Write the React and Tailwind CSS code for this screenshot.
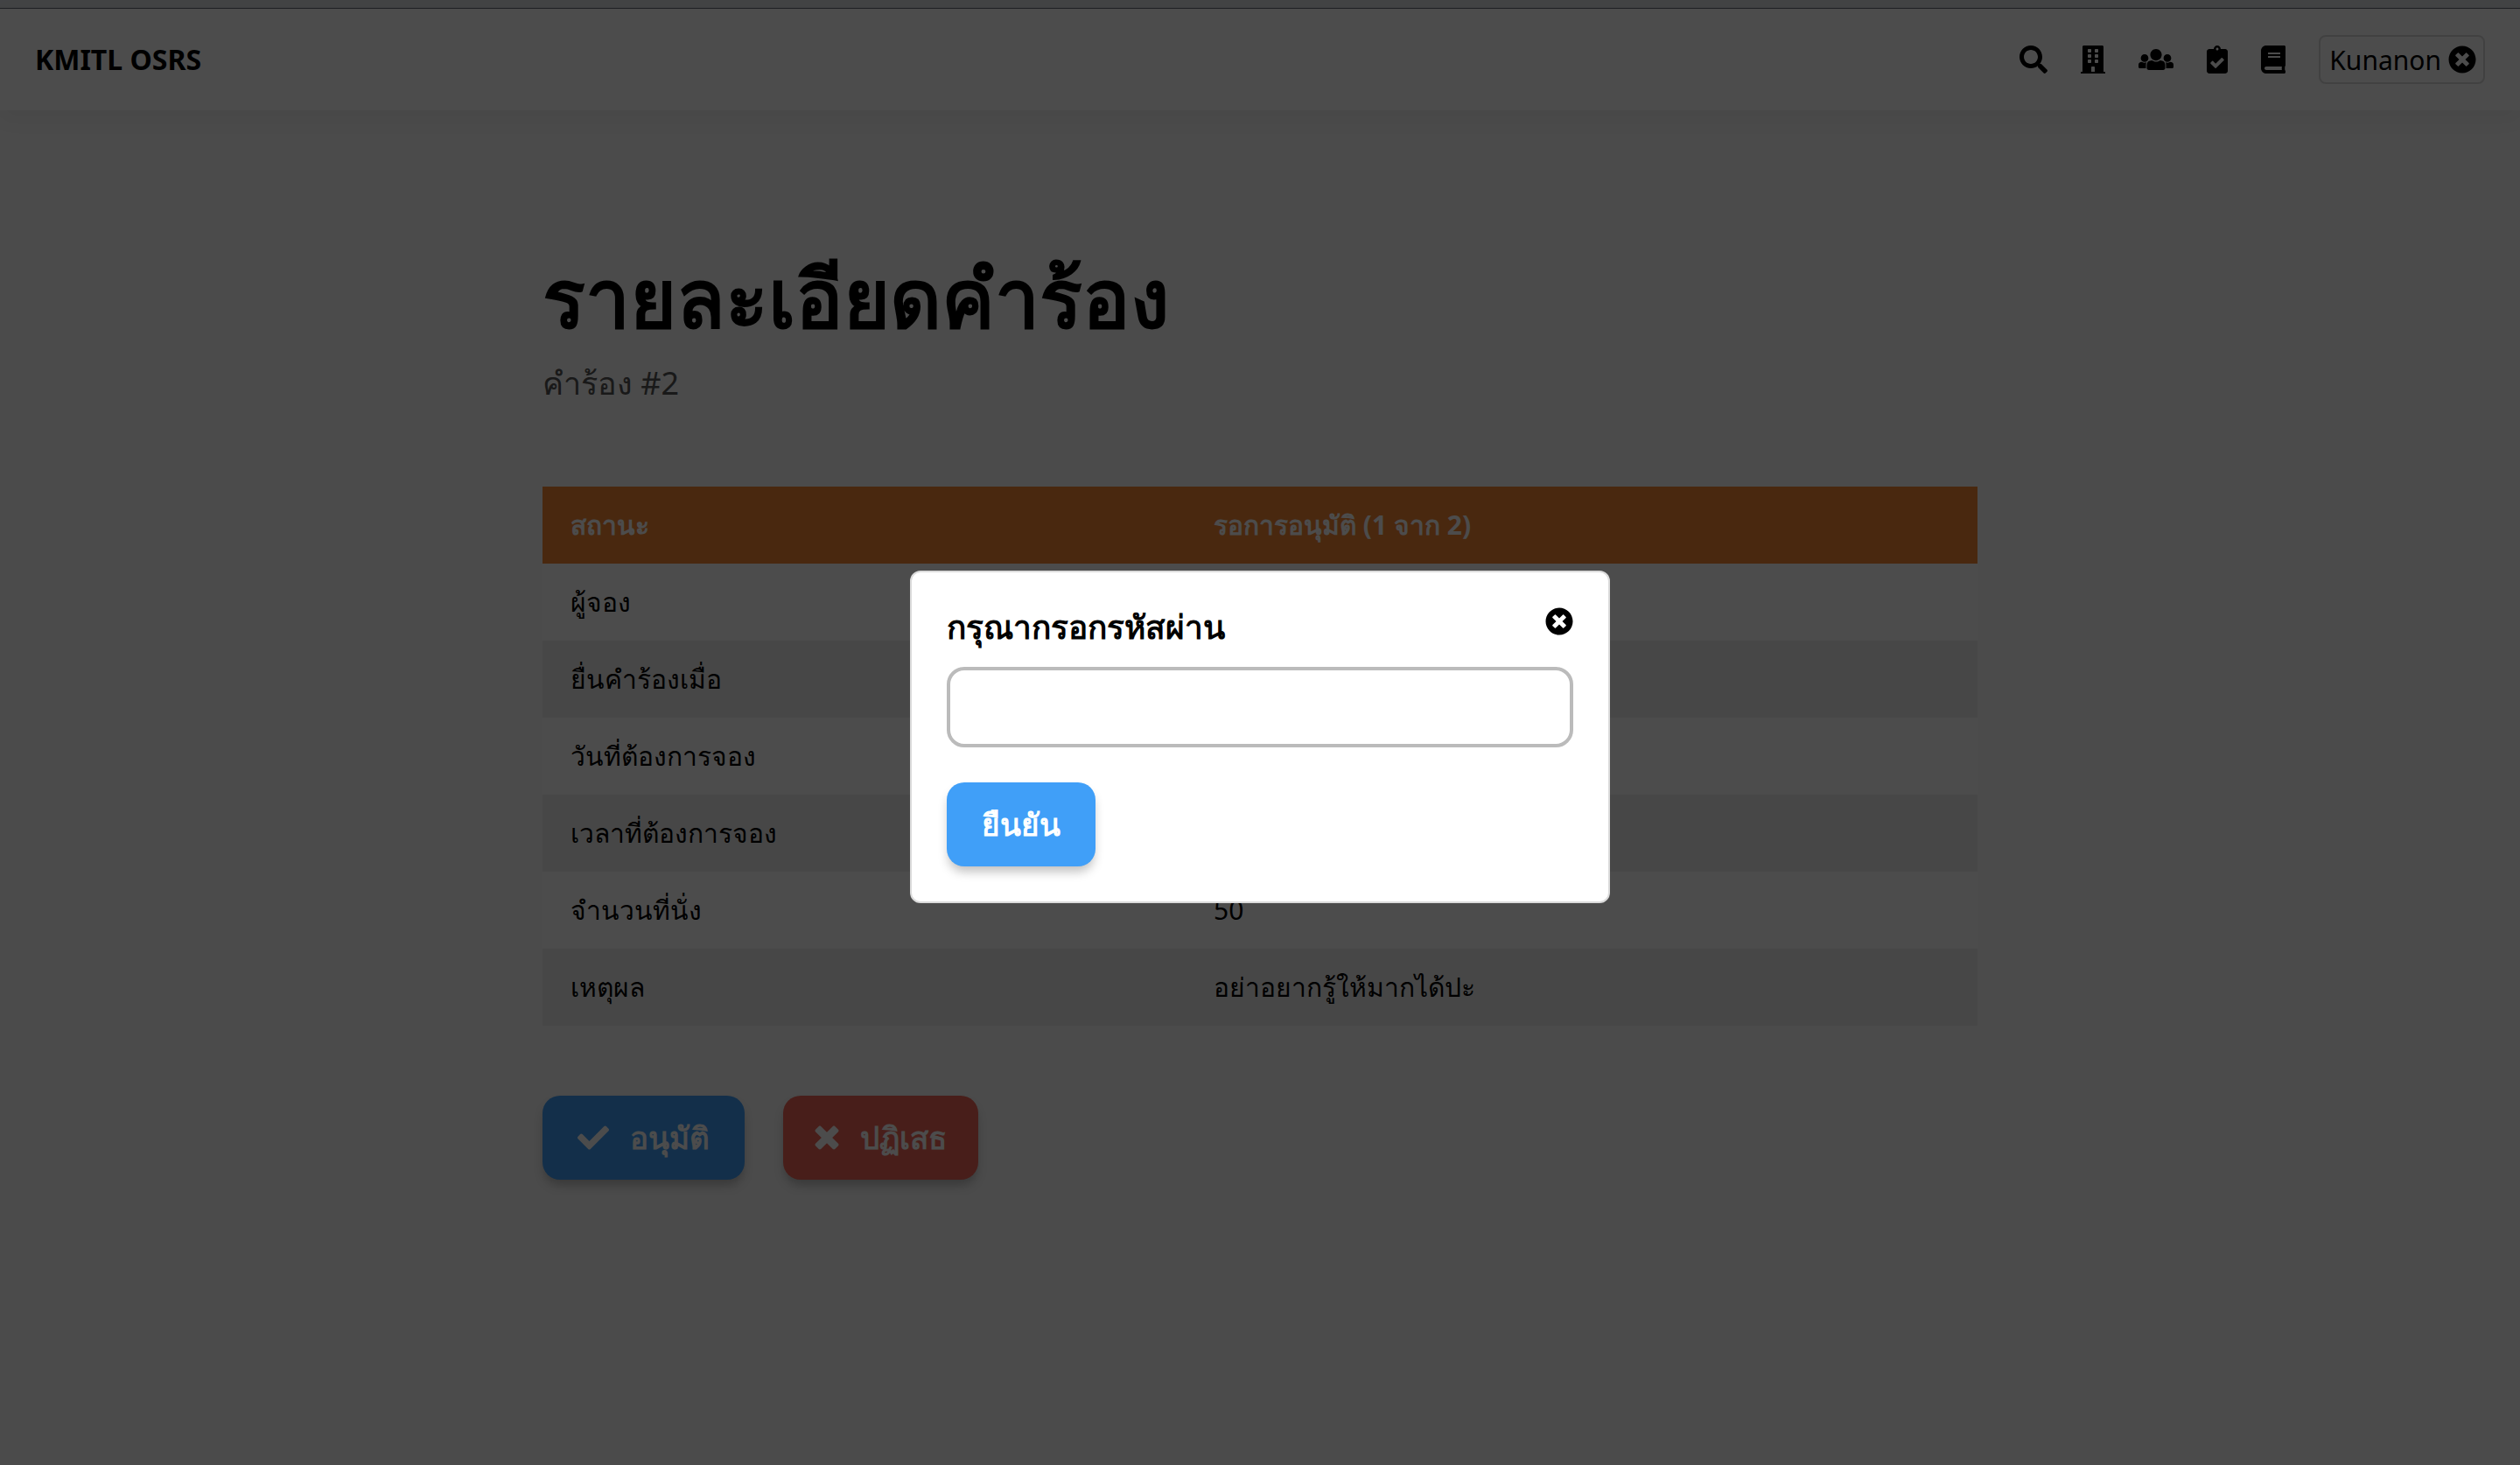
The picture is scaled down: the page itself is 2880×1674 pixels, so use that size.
import { FaSearch, FaBook, FaTimesCircle, FaCheck } from "react-icons/fa";

function BuildingIcon() {
  return (
    <svg viewBox="0 0 448 512" fill="currentColor" className="h-8 w-7" aria-hidden="true">
      <path d="M436 480h-20V24c0-13.255-10.745-24-24-24H56C42.745 0 32 10.745 32 24v456H12c-6.627 0-12 5.373-12 12v20h448v-20c0-6.627-5.373-12-12-12zM128 76c0-6.627 5.373-12 12-12h40c6.627 0 12 5.373 12 12v40c0 6.627-5.373 12-12 12h-40c-6.627 0-12-5.373-12-12V76zm0 96c0-6.627 5.373-12 12-12h40c6.627 0 12 5.373 12 12v40c0 6.627-5.373 12-12 12h-40c-6.627 0-12-5.373-12-12v-40zm52 148h-40c-6.627 0-12-5.373-12-12v-40c0-6.627 5.373-12 12-12h40c6.627 0 12 5.373 12 12v40c0 6.627-5.373 12-12 12zm76 160h-64v-84c0-6.627 5.373-12 12-12h40c6.627 0 12 5.373 12 12v84zm64-172c0 6.627-5.373 12-12 12h-40c-6.627 0-12-5.373-12-12v-40c0-6.627 5.373-12 12-12h40c6.627 0 12 5.373 12 12v40zm0-96c0 6.627-5.373 12-12 12h-40c-6.627 0-12-5.373-12-12v-40c0-6.627 5.373-12 12-12h40c6.627 0 12 5.373 12 12v40zm0-96c0 6.627-5.373 12-12 12h-40c-6.627 0-12-5.373-12-12V76c0-6.627 5.373-12 12-12h40c6.627 0 12 5.373 12 12v40z" />
    </svg>
  );
}

function UsersIcon() {
  return (
    <svg viewBox="0 0 640 512" fill="currentColor" className="h-8 w-10" aria-hidden="true">
      <path d="M320 64c57.990 0 105 47.010 105 105s-47.010 105-105 105-105-47.010-105-105S262.010 64 320 64zm113.463 217.366l-39.982-9.996c-49.168 35.365-108.766 27.473-146.961 0l-39.982 9.996C174.485 289.379 152 318.177 152 351.216V412c0 19.882 16.118 36 36 36h264c19.882 0 36-16.118 36-36v-60.784c0-33.039-22.485-61.837-54.537-69.850zM528 300c38.660 0 70-31.340 70-70s-31.340-70-70-70-70 31.340-70 70 31.340 70 70 70zm-416 0c38.660 0 70-31.340 70-70s-31.340-70-70-70-70 31.340-70 70 31.340 70 70 70zm24 112v-60.784c0-16.551 4.593-32.204 12.703-45.599-29.988 14.720-63.336 8.708-85.690-7.370l-26.655 6.664C14.990 310.252 0 329.452 0 351.477V392c0 13.255 10.745 24 24 24h112.169a52.417 52.417 0 0 1-.169-4zm467.642-107.090l-26.655-6.664c-27.925 20.086-60.890 19.233-85.786 7.218C499.369 318.893 504 334.601 504 351.216V412c0 1.347-.068 2.678-.169 4H616c13.255 0 24-10.745 24-24v-40.523c0-22.025-14.990-41.225-36.358-46.567z" />
    </svg>
  );
}

function ClipboardCheckIcon() {
  return (
    <svg viewBox="0 0 384 512" fill="currentColor" className="h-8 w-6" aria-hidden="true">
      <path d="M336 64h-80c0-35.300-28.700-64-64-64s-64 28.700-64 64H48C21.500 64 0 85.500 0 112v352c0 26.500 21.500 48 48 48h288c26.500 0 48-21.500 48-48V112c0-26.500-21.500-48-48-48zM192 40c13.300 0 24 10.700 24 24s-10.700 24-24 24-24-10.700-24-24 10.700-24 24-24zm121.200 231.800l-143 141.800c-4.700 4.700-12.300 4.600-17-.1l-82.600-83.300c-4.700-4.700-4.600-12.300.1-17L99.100 285c4.700-4.700 12.300-4.600 17 .1l46 46.400 106-105.200c4.700-4.700 12.300-4.600 17 .1l28.200 28.400c4.700 4.800 4.600 12.300-.1 17z" />
    </svg>
  );
}

function CrossIcon() {
  return (
    <svg viewBox="0 0 384 512" fill="currentColor" className="h-9 w-7" aria-hidden="true">
      <path d="M323.100 441l53.900-53.900c9.400-9.400 9.400-24.500 0-33.900L279.800 256l97.200-97.200c9.400-9.400 9.400-24.500 0-33.900L323.100 71c-9.400-9.400-24.500-9.400-33.900 0L192 168.200 94.800 71c-9.400-9.400-24.500-9.400-33.900 0L7 124.900c-9.400 9.400-9.400 24.500 0 33.900l97.200 97.200L7 353.200c-9.400 9.400-9.400 24.500 0 33.900L60.900 441c9.400 9.400 24.500 9.400 33.900 0l97.200-97.200 97.200 97.200c9.300 9.300 24.500 9.300 33.900 0z" />
    </svg>
  );
}

const rows = [
  ["ผู้จอง", "Kunanon"],
  ["ยื่นคำร้องเมื่อ", "21/11/2019"],
  ["วันที่ต้องการจอง", "22/11/2019"],
  ["เวลาที่ต้องการจอง", "09:00 - 12:00"],
  ["จำนวนที่นั่ง", "50"],
  ["เหตุผล", "อย่าอยากรู้ให้มากได้ปะ"],
];

function Header() {
  return (
    <header className="flex items-center justify-between bg-white px-10 py-[30px] shadow-[0_8px_24px_rgba(0,0,0,0.06)]">
      <a href="#home" className="text-[32px] leading-14 font-bold">KMITL OSRS</a>
      <nav className="flex items-center gap-[38px]">
        <a href="#search" aria-label="Search"><FaSearch className="size-8" /></a>
        <a href="#rooms" aria-label="Rooms"><BuildingIcon /></a>
        <a href="#users" aria-label="Users"><UsersIcon /></a>
        <a href="#requests" aria-label="Requests"><ClipboardCheckIcon /></a>
        <a href="#manual" aria-label="Manual"><FaBook className="h-8 w-7" /></a>
        <button type="button" className="flex h-14 items-center gap-2 rounded-lg border-2 border-[#dbdbdb] pr-2 pl-2.5 text-[30px]">
          Kunanon
          <FaTimesCircle className="size-8" />
        </button>
      </nav>
    </header>
  );
}

export default function App() {
  return (
    <div className="min-h-screen bg-[#fafafa] font-['Noto_Sans',sans-serif] text-black">
      <div className="h-2.5 border-b border-[#666a78] bg-[#dee1e6]" />
      <Header />
      <main className="mx-auto w-[1640px] max-w-full pt-[158px]">
        <h1 className="text-[91px] leading-[110px] font-bold">รายละเอียดคำร้อง</h1>
        <p className="mt-[14px] text-[36px] leading-[60px] text-[#555555]">คำร้อง #2</p>
        <table className="mt-[88px] w-full table-fixed text-left text-[30px] leading-[48px]">
          <colgroup>
            <col className="w-[735px]" />
            <col />
          </colgroup>
          <thead>
            <tr className="h-[88px] bg-[#f38535] text-white">
              <th className="px-8">สถานะ</th>
              <th className="px-8">รอการอนุมัติ (1 จาก 2)</th>
            </tr>
          </thead>
          <tbody>
            {rows.map(([label, value]) => (
              <tr key={label} className="h-[88px] odd:bg-white even:bg-[#efefef]">
                <td className="px-8">{label}</td>
                <td className="px-8">{value}</td>
              </tr>
            ))}
          </tbody>
        </table>
        <div className="mt-20 flex gap-11">
          <button type="button" className="flex h-24 items-center gap-6 rounded-[20px] bg-[#409ff8] px-10 text-[35px] font-bold text-white shadow-[0_8px_12px_-2px_rgba(0,0,0,0.25)]">
            <FaCheck className="size-9" />
            อนุมัติ
          </button>
          <button type="button" className="flex h-24 items-center gap-6 rounded-[20px] bg-[#f06757] px-9 text-[35px] font-bold text-white shadow-[0_8px_12px_-2px_rgba(0,0,0,0.25)]">
            <CrossIcon />
            ปฏิเสธ
          </button>
        </div>
      </main>

      <div className="fixed inset-0 flex items-center justify-center bg-black/70 pt-2.5">
        <form role="dialog" aria-modal="true" className="w-[800px] max-w-full rounded-xl border-2 border-[#dbdbdb] bg-white p-10">
          <div className="flex items-start justify-between">
            <label htmlFor="password" className="text-[37px] leading-[44px] font-bold">กรุณากรอกรหัสผ่าน</label>
            <button type="button" aria-label="Close"><FaTimesCircle className="size-8" /></button>
          </div>
          <input id="password" type="password" className="mt-6 block h-[92px] w-full rounded-[20px] border-4 border-[#bbbbbb] px-6 text-[32px]" />
          <button type="button" className="mt-10 h-24 rounded-[20px] bg-[#409ff8] px-10 text-[35px] font-bold text-white shadow-[0_8px_12px_-2px_rgba(0,0,0,0.25)]">
            ยืนยัน
          </button>
        </form>
      </div>
    </div>
  );
}
